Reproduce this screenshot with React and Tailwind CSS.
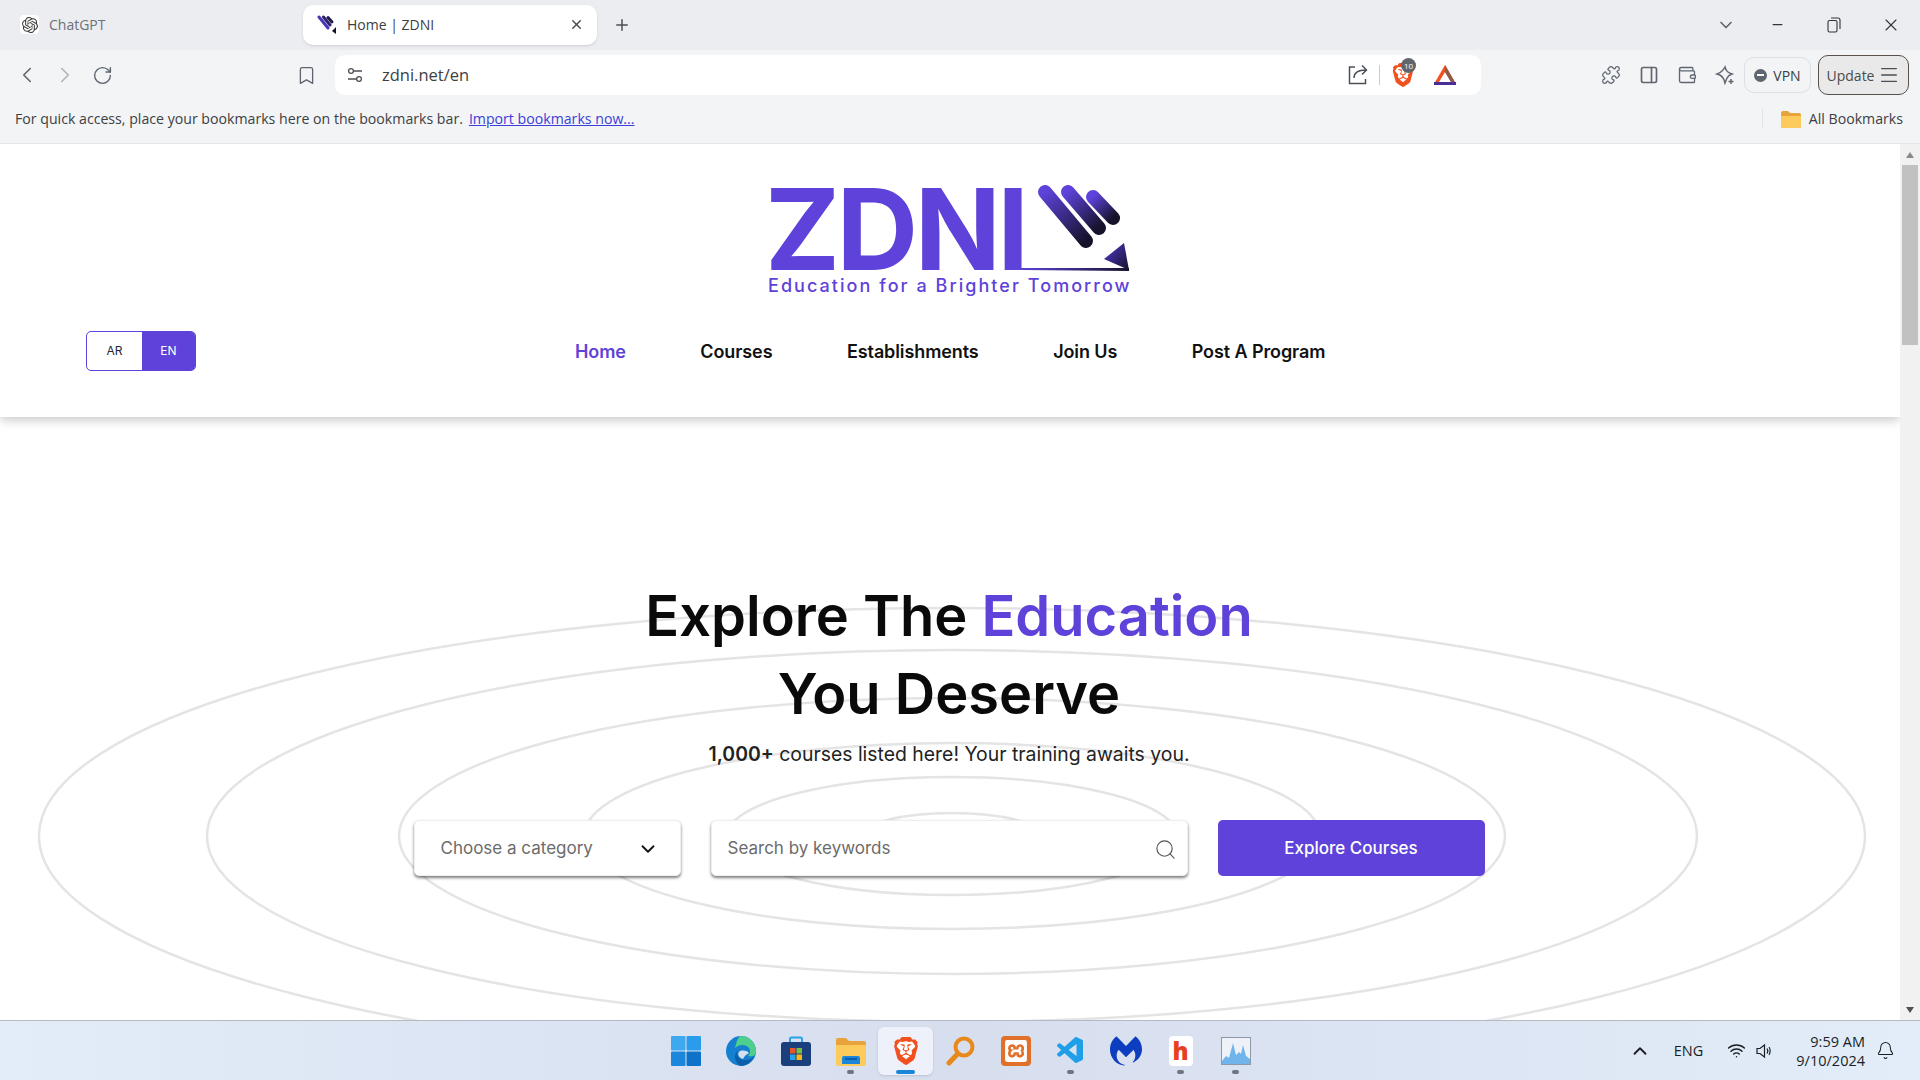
import { Bell, Bookmark, ChevronDown, ChevronLeft, ChevronRight, ChevronUp, Menu, Minus, PanelRight, Plus, Puzzle, RotateCw, Search, Wallet, Wifi, X } from "lucide-react";
import { SiBrave, SiMalwarebytes, SiOpenai, SiXampp } from "react-icons/si";
import { VscVscode } from "react-icons/vsc";

const uiFont = { fontFamily: '"Open Sans", "Noto Sans", sans-serif' };

const LogoMark = () => (
  <svg className="absolute left-[-27px] top-[-15px] pointer-events-none" width="420" height="140" viewBox="0 0 420 140">
    <defs>
      <linearGradient id="lg1" gradientUnits="userSpaceOnUse" x1="304" y1="22" x2="345" y2="71">
        <stop offset="0" stopColor="#5e42d9" />
        <stop offset="1" stopColor="#15122a" />
      </linearGradient>
      <linearGradient id="lg2" gradientUnits="userSpaceOnUse" x1="327" y1="22" x2="358" y2="58">
        <stop offset="0" stopColor="#5e42d9" />
        <stop offset="1" stopColor="#15122a" />
      </linearGradient>
      <linearGradient id="lg3" gradientUnits="userSpaceOnUse" x1="352" y1="27" x2="372" y2="48">
        <stop offset="0" stopColor="#5e42d9" />
        <stop offset="1" stopColor="#15122a" />
      </linearGradient>
      <linearGradient id="lg4" gradientUnits="userSpaceOnUse" x1="363" y1="80" x2="388" y2="100">
        <stop offset="0" stopColor="#4a35b8" />
        <stop offset="1" stopColor="#15122a" />
      </linearGradient>
      <linearGradient id="lg5" gradientUnits="userSpaceOnUse" x1="280" y1="99" x2="388" y2="99">
        <stop offset="0" stopColor="#5e42d9" />
        <stop offset="1" stopColor="#15122a" />
      </linearGradient>
    </defs>
    <line x1="304" y1="22" x2="345" y2="71" stroke="url(#lg1)" strokeWidth="14" strokeLinecap="round" />
    <line x1="327" y1="22" x2="358" y2="58" stroke="url(#lg2)" strokeWidth="14" strokeLinecap="round" />
    <line x1="352" y1="27" x2="372" y2="48" stroke="url(#lg3)" strokeWidth="14" strokeLinecap="round" />
    <polygon points="363,89 383,73 388,100" fill="url(#lg4)" />
    <polygon points="280,98 388,98 388,101 280,100" fill="url(#lg5)" />
  </svg>
);

const TabFavicon = () => (
  <svg width="20" height="20" viewBox="0 0 20 20">
    <line x1="2" y1="2" x2="11" y2="13" stroke="#4a35b8" strokeWidth="3" strokeLinecap="round" />
    <line x1="6.5" y1="2" x2="13" y2="10" stroke="#2d2470" strokeWidth="3" strokeLinecap="round" />
    <line x1="11" y1="2.5" x2="15" y2="7" stroke="#1e1a4a" strokeWidth="3" strokeLinecap="round" />
    <polygon points="15,16 19,12 19,19" fill="#15122a" />
  </svg>
);

const SiteSettings = () => (
  <svg width="18" height="18" viewBox="0 0 18 18" fill="none" stroke="#4b5057" strokeWidth="1.3">
    <circle cx="5" cy="5" r="2.4" />
    <path d="M8 5h8M2 13h8" />
    <circle cx="13" cy="13" r="2.4" />
  </svg>
);

const ShareIcon = () => (
  <svg width="22" height="22" viewBox="0 0 22 22" fill="none" stroke="#4b5057" strokeWidth="1.5">
    <path d="M8 3H2.5v16.5h16V15" />
    <path d="M7 14c0-5 3.5-8 12-8M15 1.5 19.5 6 15 10.5" />
  </svg>
);

const BatIcon = () => (
  <svg width="24" height="22" viewBox="0 0 24 22">
    <polygon points="12,1 23,20 1,20" fill="#f1501f" />
    <polygon points="12,8 18,18 6,18" fill="#fff" />
    <polygon points="12,1 23,20 18,18 12,8" fill="#8a5a4a" />
    <rect x="1" y="18" width="22" height="3" fill="#4a2f98" />
  </svg>
);

const SparkPlus = () => (
  <svg width="20" height="20" viewBox="0 0 20 20" fill="none" stroke="#5f6670" strokeWidth="1.5">
    <path d="M10 2c1 4 2.5 5.5 7 7-3 1-4 2-5 4l-2 5c-1-5-3-8-8-9 4-1.500 6-3 8-7Z" />
    <path d="M16 14v5M13.500 16.500h5" stroke="#5f6670" />
  </svg>
);

const RestoreIcon = () => (
  <svg width="14" height="16" viewBox="0 0 14 16" fill="none" stroke="#30343a" strokeWidth="1.1">
    <rect x="1" y="3.500" width="9" height="11.500" rx="1.500" />
    <path d="M4 1h7a2 2 0 0 1 2 2v9" />
  </svg>
);

const FolderSmall = () => (
  <svg width="20" height="18" viewBox="0 0 20 18">
    <path d="M0 3a2 2 0 0 1 2-2h5l2 2h9a2 2 0 0 1 2 2v11a2 2 0 0 1-2 2H2a2 2 0 0 1-2-2Z" fill="#e8a33d" />
    <path d="M0 6h20v10a2 2 0 0 1-2 2H2a2 2 0 0 1-2-2Z" fill="#fdcb5c" />
  </svg>
);

const WinIcon = () => (
  <svg width="30" height="30" viewBox="0 0 30 30">
    <rect x="0" y="0" width="14.500" height="14.500" rx="1" fill="#3fa9f0" />
    <rect x="15.500" y="0" width="14.500" height="14.500" rx="1" fill="#2a9cec" />
    <rect x="0" y="15.500" width="14.500" height="14.500" rx="1" fill="#1b87dc" />
    <rect x="15.500" y="15.500" width="14.500" height="14.500" rx="1" fill="#0d72c8" />
  </svg>
);

const EdgeIcon = () => (
  <svg width="30" height="30" viewBox="0 0 30 30">
    <circle cx="15" cy="15" r="15" fill="#1580d0" />
    <path d="M15 0a15 15 0 0 1 15 15c0 5-4 6-8 5 2-2 3-5 1-8-3-4-10-4-14 0C11 3 13 0 15 0Z" fill="#4ecf8c" />
    <path d="M12 14c-3 5 1 11 8 10 3 0 6-1 8-4-2 6-8 10-13 10C10 28 6 20 12 14Z" fill="#0a5fa8" />
    <path d="M13 16c2-2 7-2 10 1-2 1-5 3-6 6-3-1-6-4-4-7Z" fill="#d8dfef" />
  </svg>
);

const StoreIcon = () => (
  <svg width="30" height="30" viewBox="0 0 30 30">
    <path d="M9 7V3a1.500 1.500 0 0 1 1.500-1.500h9A1.500 1.500 0 0 1 21 3v4" fill="none" stroke="#2aa0e8" strokeWidth="2" />
    <rect x="0" y="6" width="30" height="24" rx="3" fill="#1a3f7c" />
    <rect x="9" y="12" width="5.500" height="5.500" fill="#e8552d" />
    <rect x="15.500" y="12" width="5.500" height="5.500" fill="#7dbb42" />
    <rect x="9" y="18.500" width="5.500" height="5.500" fill="#2aa0e8" />
    <rect x="15.500" y="18.500" width="5.500" height="5.500" fill="#fdb813" />
  </svg>
);

const FolderIcon = () => (
  <svg width="30" height="30" viewBox="0 0 30 30">
    <path d="M0 4a2 2 0 0 1 2-2h8l3 3h15a2 2 0 0 1 2 2v21H0Z" fill="#e8a33d" />
    <path d="M0 9h30v19a2 2 0 0 1-2 2H2a2 2 0 0 1-2-2Z" fill="#fdcb5c" />
    <path d="M6 22a2 2 0 0 1 2-2h14a2 2 0 0 1 2 2v6H6Z" fill="#1b87dc" />
    <rect x="9" y="22" width="12" height="2" fill="#0a5fa8" />
  </svg>
);

const BraveIcon = () => (
  <div className="relative w-[28px] h-[32px] flex items-center justify-center">
    <div className="absolute left-[5px] top-[6px] w-[18px] h-[16px] bg-white rounded-sm" />
    <SiBrave size={32} color="#f1501f" className="relative" />
  </div>
);

const SearchAppIcon = () => (
  <svg width="30" height="30" viewBox="0 0 30 30" fill="none" stroke="#e8891c">
    <circle cx="18" cy="11" r="8.500" strokeWidth="4" />
    <line x1="11.500" y1="18" x2="3" y2="27" strokeWidth="5" strokeLinecap="round" />
  </svg>
);

const ChartIcon = () => (
  <svg width="30" height="28" viewBox="0 0 30 28">
    <rect x="0.500" y="0.500" width="29" height="27" fill="#eef2f8" stroke="#8f98a6" />
    <path d="M1 24 5 19l3 2 4-15 3 12 3-3 2 2 2-9 3 11 4 3v5H1Z" fill="#6fb4ec" />
  </svg>
);

const taskItems = [
  { key: "win", icon: <WinIcon /> },
  { key: "edge", icon: <EdgeIcon /> },
  { key: "store", icon: <StoreIcon /> },
  { key: "files", icon: <FolderIcon />, dot: true },
  { key: "brave", icon: <BraveIcon />, active: true },
  { key: "search", icon: <SearchAppIcon /> },
  {
    key: "xampp",
    icon: (
      <div className="w-[30px] h-[30px] rounded-[4px] bg-[#e0702a] flex items-center justify-center">
        <SiXampp size={22} color="#fff" />
      </div>
    ),
  },
  { key: "vscode", icon: <VscVscode size={32} color="#1f9fe8" />, dot: true },
  { key: "malware", icon: <SiMalwarebytes size={32} color="#0d3ec0" /> },
  {
    key: "h",
    icon: (
      <div className="w-[24px] h-[30px] rounded-[4px] bg-white flex items-center justify-center text-[24px] font-black leading-none text-[#e8401c]" style={uiFont}>
        h
      </div>
    ),
    dot: true,
  },
  { key: "chart", icon: <ChartIcon />, dot: true },
];

const rings = [
  [913, 228],
  [745, 186],
  [553, 138],
  [368, 93],
  [225, 59],
  [90, 23],
];

const navItems = ["Home", "Courses", "Establishments", "Join Us", "Post A Program"];

export default function App() {
  return (
    <div className="w-[1920px] h-[1080px] overflow-hidden flex flex-col bg-white" style={{ fontFamily: "Inter, sans-serif" }}>
      {/* tab strip */}
      <div className="h-[50px] bg-[#ebedf0] flex items-center shrink-0 text-[14px] pb-[1px]" style={uiFont}>
        <div className="w-[303px] flex items-center pl-[20px] gap-[10px] text-[#6d7178]">
          <div className="w-[19px] h-[19px] rounded-[4px] bg-white flex items-center justify-center">
            <SiOpenai size={16} color="#3c3c3c" />
          </div>
          ChatGPT
        </div>
        <div className="w-[294px] h-[40px] bg-white rounded-[10px] flex items-center pl-[14px] pr-[13px] gap-[10px] text-[#3c4043] shadow-sm">
          <TabFavicon />
          <span className="flex-1">Home | ZDNI</span>
          <X size={15} strokeWidth={2.4} color="#4b5057" />
        </div>
        <Plus size={18} color="#4b5057" className="ml-[16px]" />
        <div className="ml-auto flex items-center pr-[19px]">
          <ChevronDown size={20} color="#5f6670" />
          <Minus size={15} color="#30343a" className="ml-[34px]" />
          <div className="ml-[42px]">
            <RestoreIcon />
          </div>
          <X size={20} strokeWidth={1.3} color="#30343a" className="ml-[40px]" />
        </div>
      </div>

      {/* toolbar */}
      <div className="h-[50px] bg-[#f3f4f6] flex items-center shrink-0 pl-[14px] text-[#3c4043]" style={uiFont}>
        <ChevronLeft size={26} strokeWidth={1.5} color="#5f6670" />
        <ChevronRight size={26} strokeWidth={1.5} color="#b0b4ba" className="ml-[12px]" />
        <RotateCw size={21} strokeWidth={1.6} color="#5f6670" className="ml-[14px]" />
        <Bookmark size={21} strokeWidth={1.5} color="#5f6670" className="ml-[183px]" />
        <div className="ml-[18px] w-[1146px] h-[40px] bg-white rounded-[10px] flex items-center pl-[11px] pr-[24px]">
          <SiteSettings />
          <span className="ml-[18px] text-[16.5px] flex-1">zdni.net/en</span>
          <ShareIcon />
          <div className="w-px h-[20px] bg-[#c8cbd0] ml-[10px]" />
          <div className="relative ml-[11px]">
            <SiBrave size={24} color="#f1501f" />
            <span className="absolute left-[10px] top-[-5px] w-[15px] h-[15px] rounded-full bg-[#62666c] text-white text-[8px] flex items-center justify-center">10</span>
          </div>
          <div className="ml-[18px]">
            <BatIcon />
          </div>
        </div>
        <Puzzle size={20} strokeWidth={1.5} color="#5f6670" className="ml-[120px]" />
        <PanelRight size={20} strokeWidth={2} color="#5f6670" className="ml-[18px]" />
        <Wallet size={20} strokeWidth={1.6} color="#5f6670" className="ml-[18px]" />
        <div className="ml-[18px]">
          <SparkPlus />
        </div>
        <div className="ml-[9px] w-[67px] h-[36px] rounded-[10px] border border-[#dcdfe6] flex items-center justify-center gap-[6px] text-[14px]">
          <span className="w-[13px] h-[13px] rounded-full bg-[#5f6670] flex items-center justify-center">
            <span className="w-[7px] h-[2px] bg-white" />
          </span>
          VPN
        </div>
        <div className="ml-[7px] w-[91px] h-[40px] rounded-[10px] border border-[#57514a] bg-[#e9e9e9] flex items-center justify-center gap-[4px] text-[14px] text-[#4b4b4b]">
          Update
          <Menu size={22} strokeWidth={1.5} color="#4b5057" />
        </div>
      </div>

      {/* bookmarks bar */}
      <div className="h-[44px] bg-[#f3f4f6] border-b border-[#e4e6ea] flex items-center shrink-0 pl-[15px] pr-[17px] pb-[5px] text-[14.15px] text-[#3c4043]" style={uiFont}>
        <span>For quick access, place your bookmarks here on the bookmarks bar.</span>
        <span className="ml-[6px] text-[#3b3fd8] underline">Import bookmarks now...</span>
        <div className="ml-auto w-px h-[20px] bg-[#e2e4e8]" />
        <div className="ml-[18px]">
          <FolderSmall />
        </div>
        <span className="ml-[8px]">All Bookmarks</span>
      </div>

      {/* page */}
      <div className="flex-1 flex min-h-0">
        <div className="flex-1 relative overflow-hidden">
          <svg className="absolute left-0 top-0" width="1900" height="876" fill="none">
            {rings.map(([rx, ry]) => (
              <ellipse key={rx} cx="952" cy="692" rx={rx} ry={ry} stroke="#e4e4e4" strokeWidth="2.5" />
            ))}
          </svg>

          <header className="relative h-[273px] bg-white shadow-[0_3px_10px_rgba(0,0,0,0.22)] flex flex-col">
            <div className="relative w-[362px] h-[115px] mt-[41px] ml-[768px]">
              <div className="text-[113px] font-bold leading-[88px] tracking-[-3.5px] -ml-[3px] text-[#5e42d9]">ZDNI</div>
              <div className="mt-[2px] text-[18px] font-medium leading-[22px] tracking-[2.05px] text-[#5e42d9] whitespace-nowrap">Education for a Brighter Tomorrow</div>
              <LogoMark />
            </div>
            <div className="flex items-center pl-[86px] mt-[31px]">
              <div className="w-[110px] h-[40px] rounded-[5px] border border-[#5e42d9] flex overflow-hidden text-[12px]">
                <div className="w-[55px] flex items-center justify-center text-[#1f2937]">AR</div>
                <div className="flex-1 bg-[#5e42d9] text-white flex items-center justify-center">EN</div>
              </div>
              <nav className="ml-[379px] flex items-center gap-[74.5px] text-[18px] font-semibold tracking-[-0.1px] text-[#111]">
                {navItems.map((item) => (
                  <span key={item} className={item === "Home" ? "text-[#5e42d9]" : ""}>
                    {item}
                  </span>
                ))}
              </nav>
            </div>
          </header>

          <main className="relative flex flex-col items-center pt-[160px] pr-[2px]">
            <h1 className="text-[56px] font-semibold leading-[78px] text-[#0a0a0a] text-center">
              Explore The <span className="text-[#5e42d9]">Education</span>
              <br />
              You Deserve
            </h1>
            <p className="mt-[7px] text-[19.4px] leading-[28px] text-[#222]">
              <span className="font-semibold">1,000+</span> courses listed here! Your training awaits you.
            </p>
            <div className="mt-[52px] flex items-stretch h-[56px] text-[17px]">
              <div className="w-[267px] bg-white rounded-[5px] border border-[#eee] shadow-[0_2px_3px_rgba(0,0,0,0.5)] flex items-center pl-[26px] pr-[21px] pt-[2px] text-[#6b6b6b]">
                <span className="flex-1">Choose a category</span>
                <ChevronDown size={22} strokeWidth={2} color="#111" />
              </div>
              <div className="ml-[30px] w-[477px] bg-white rounded-[5px] border border-[#eee] shadow-[0_2px_3px_rgba(0,0,0,0.5)] flex items-center pl-[16px] pr-[10px] pt-[2px] text-[#6b6b6b]">
                <span className="flex-1">Search by keywords</span>
                <Search size={23} strokeWidth={1.2} color="#555" />
              </div>
              <div className="ml-[30px] w-[267px] bg-[#5e42d9] rounded-[5px] flex items-center justify-center pt-[2px] text-white font-medium">Explore Courses</div>
            </div>
          </main>
        </div>

        {/* scrollbar */}
        <div className="w-[20px] bg-[#f1f1f1] flex flex-col items-center shrink-0 pt-[8px] pb-[7px]">
          <div className="w-0 h-0 border-x-[4px] border-x-transparent border-b-[6px] border-b-[#8a8a8a]" />
          <div className="mt-[7px] w-[16px] h-[180px] bg-[#c1c1c1]" />
          <div className="mt-auto w-0 h-0 border-x-[4px] border-x-transparent border-t-[6px] border-t-[#505050]" />
        </div>
      </div>

      {/* taskbar */}
      <div className="h-[60px] shrink-0 border-t border-[#b5bac2] bg-gradient-to-r from-[#e2edf9] via-[#d7deee] to-[#e2edf9] flex items-center relative" style={uiFont}>
        <div className="absolute left-[658px] top-0 h-full flex items-center">
          {taskItems.map((t) => (
            <div key={t.key} className={"relative w-[55px] h-[48px] flex items-center justify-center rounded-[6px] " + (t.active ? "bg-[#eef1fa] shadow-sm" : "")}>
              {t.icon}
              {t.dot && <span className="absolute bottom-[1px] left-[24px] w-[7px] h-[4px] rounded-full bg-[#70757d]" />}
              {t.active && <span className="absolute bottom-[1px] left-[18px] w-[19px] h-[4px] rounded-full bg-[#1a86d8]" />}
            </div>
          ))}
        </div>
        <div className="ml-auto flex items-center pr-[32px] text-[#1b1f24]">
          <ChevronUp size={22} strokeWidth={2} color="#1b1f24" />
          <span className="ml-[23px] text-[14.5px]">ENG</span>
          <Wifi size={19} strokeWidth={1.8} className="ml-[24px]" />
          <svg width="18" height="18" viewBox="0 0 18 18" fill="none" stroke="#1b1f24" strokeWidth="1.2" className="ml-[10px]">
            <path d="M1 6.500h3L8.500 3v12L4 11.500H1Z" />
            <path d="M11 6.500c1 1.500 1 3.500 0 5M13 5c1.500 2 1.500 6 0 8" />
          </svg>
          <div className="ml-[22px] text-right text-[14.5px] leading-[19px]">
            <div>9:59 AM</div>
            <div>9/10/2024</div>
          </div>
          <Bell size={19} strokeWidth={1.3} className="ml-[11px] -mr-[7px]" />
        </div>
      </div>
    </div>
  );
}
